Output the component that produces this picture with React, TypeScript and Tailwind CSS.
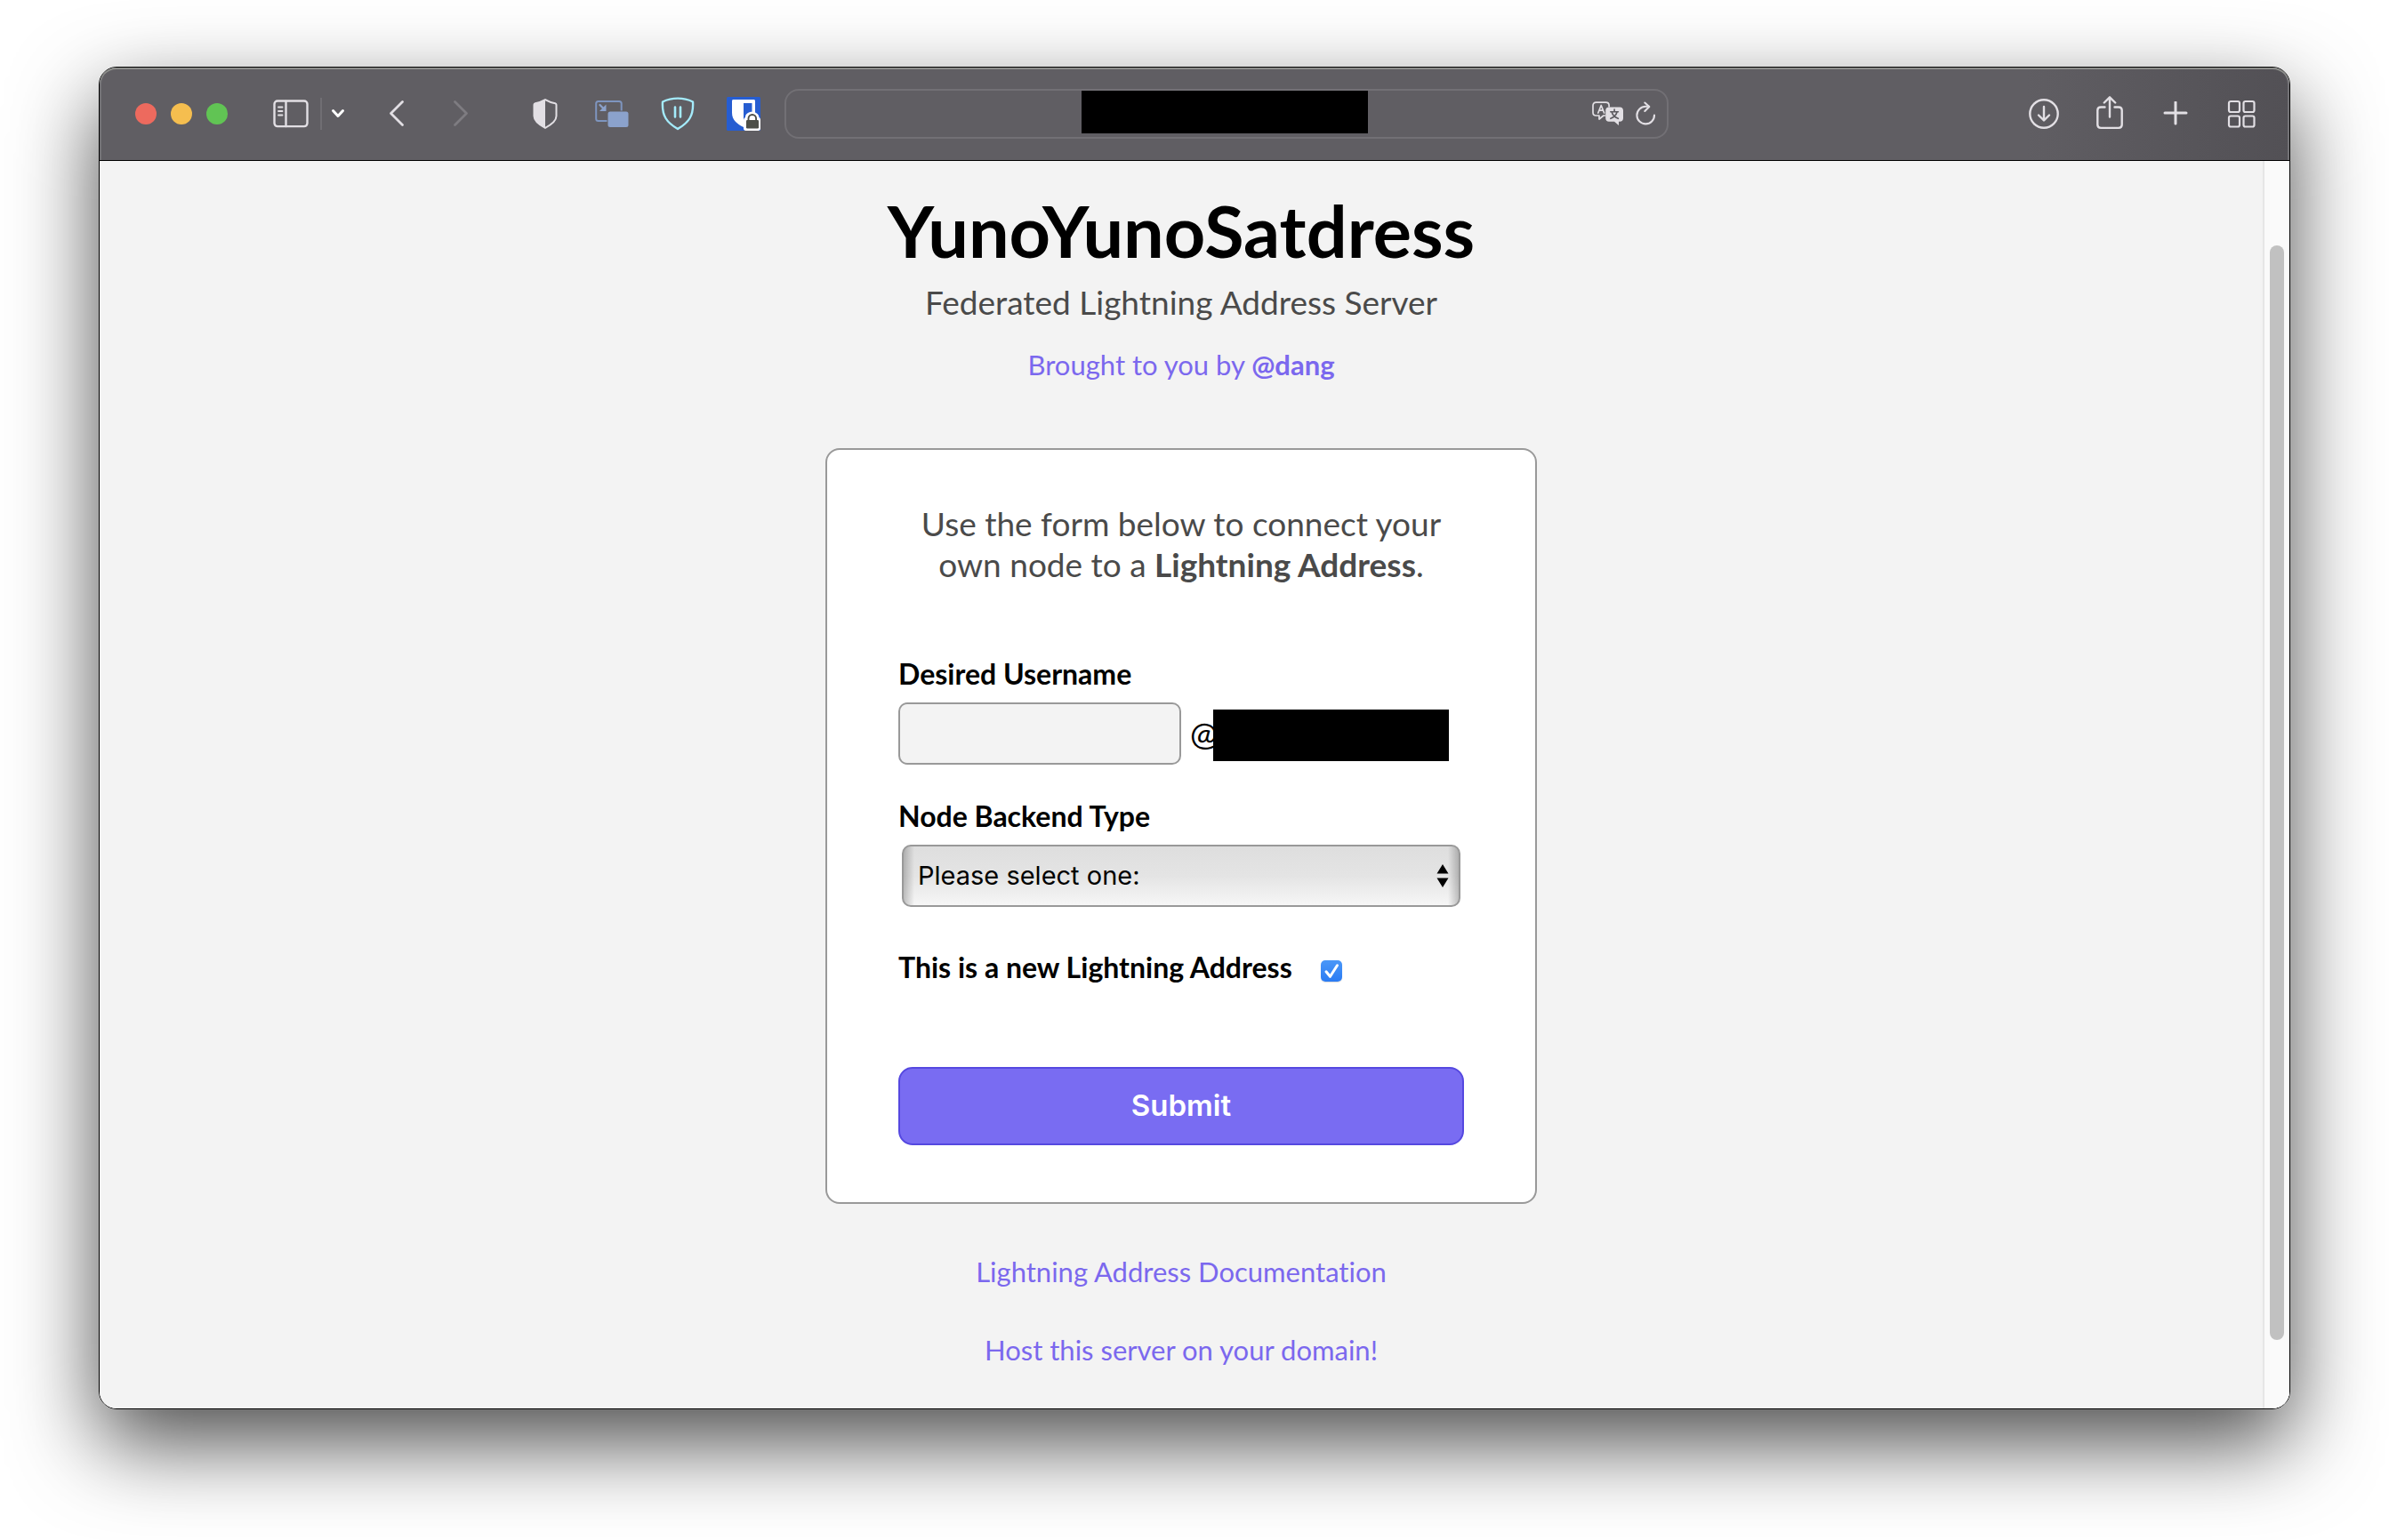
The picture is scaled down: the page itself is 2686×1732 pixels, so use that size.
import type { ReactNode } from "react";

const INK = "#e2dfe4";

function ToolButton({ label, className, children }: { label: string; className: string; children: ReactNode }) {
  return (
    <button type="button" aria-label={label} className={`flex h-10 shrink-0 items-center justify-center ${className}`}>
      {children}
    </button>
  );
}

function SidebarIcon() {
  return (
    <svg width="40" height="32" viewBox="0 0 40 32" fill="none" stroke={INK} strokeWidth="2.4" strokeLinecap="round">
      <rect x="1.5" y="1.5" width="37" height="28.6" rx="3.5" />
      <path d="M14.5 2v28" />
      <path d="M6 8.5h4.5M6 13h4.5M6 17.5h4.5" strokeWidth="1.8" />
    </svg>
  );
}

function ShieldHalfIcon() {
  return (
    <svg width="28" height="34" viewBox="0 0 28 34">
      <path d="M14 1.2c3.4 2 7.6 3.4 11.2 4 .8.2 1.3.8 1.3 1.6v12.6c0 5.6-5.5 9.6-12.500 13.4C7 29 1.5 25 1.5 19.4V6.8c0-.8.5-1.4 1.3-1.6C6.4 4.6 10.6 3.2 14 1.2z" fill="none" stroke={INK} strokeWidth="2" />
      <path d="M14 1C10.6 3 6.4 4.4 2.8 5 2 5.2 1.3 5.8 1.3 6.8v12.6C1.3 25 7 29.2 14 33z" fill={INK} />
    </svg>
  );
}

function PipIcon() {
  return (
    <svg width="38" height="32" viewBox="0 0 38 32">
      <rect x="1.2" y="2" width="28.5" height="22" rx="2.5" fill="none" stroke="#7e95bf" strokeWidth="2" />
      <rect x="13.5" y="12.5" width="25" height="20" fill="#605e63" />
      <rect x="14.5" y="13.5" width="23" height="17.5" rx="2.5" fill="#8ba2cc" />
      <path d="M5.5 6l4.5 4.5" stroke="#8ba2cc" strokeWidth="2.2" strokeLinecap="round" />
      <path d="M12.5 5.5v7.5H5z" fill="#8ba2cc" />
    </svg>
  );
}

function PauseShieldIcon() {
  return (
    <svg width="38" height="38" viewBox="0 0 38 38" fill="none" stroke="#a4ebfb" strokeWidth="2.4" strokeLinecap="round" strokeLinejoin="round">
      <path d="M2 5.5C7 3 13 1.6 19 1.6S31 3 36 5.5c.4 6.500-.2 13-3.500 18.500C29.500 29 25 32.500 19 36 13 32.500 8.500 29 5.500 24 2.200 18.500 1.600 12 2 5.500z" />
      <path d="M16 11.500v11M22 11.500v11" strokeWidth="2.6" />
    </svg>
  );
}

function PasswordVaultIcon() {
  return (
    <svg width="38" height="38" viewBox="0 0 38 38">
      <rect width="38" height="38" rx="1.5" fill="#265dd1" />
      <path d="M6 4.500C6 3.600 6.600 3 7.500 3h23c.9 0 1.500.6 1.500 1.500V18c0 8-6 12.500-13 16C12 30.500 6 26 6 18z" fill="#fff" />
      <path d="M19 7h9.500v11c0 5-4 9-9.500 12z" fill="#265dd1" />
      <path d="M19 26.500c0-2 1-3 2-3.600C21 19 24.500 16.700 28.500 16.700S36 19 36.500 22.900c1 .6 1.500 1.600 1.500 3V35.500c0 1.600-.9 2.500-2.500 2.500h-14c-1.600 0-2.500-.9-2.500-2.500z" fill="#fff" />
      <rect x="22" y="26" width="14" height="9.5" rx="1.2" fill="#4d4f48" />
      <path d="M24.500 26.500v-2.200a4.300 4.300 0 0 1 8.600 0v2.200" fill="none" stroke="#4d4f48" strokeWidth="1.9" />
    </svg>
  );
}

function TranslateIcon() {
  return (
    <svg width="36" height="28" viewBox="0 0 36 28">
      <path d="M4.500 1.200h11c2.200 0 3.600 1.400 3.600 3.500v1.800M15 16h-2.200l-4.800 4v-4H4.500c-2.200 0-3.500-1.300-3.500-3.500V4.700C1 2.600 2.300 1.200 4.500 1.200" fill="none" stroke={INK} strokeWidth="1.7" strokeLinejoin="round" />
      <path d="M6.800 13L10.200 4.500 13.600 13M8 10.200h4.400" fill="none" stroke={INK} strokeWidth="1.7" strokeLinecap="round" strokeLinejoin="round" />
      <path d="M19 6.500h12.200c2.400 0 3.800 1.400 3.800 3.800v8.700c0 2.400-1.400 3.800-3.800 3.800H30V27l-5-4.200h-6c-2.400 0-3.800-1.400-3.800-3.800v-8.700c0-2.400 1.400-3.800 3.800-3.800z" fill={INK} />
      <path d="M25.100 9v2.300M20.800 11.700h8.600M22.200 12c.8 3.200 3.400 5.800 7.200 7.300M28 12c-.8 3.200-3.400 5.800-7.200 7.300" fill="none" stroke="#5c5a5f" strokeWidth="1.6" strokeLinecap="round" />
    </svg>
  );
}

function ReloadIcon() {
  return (
    <svg width="24" height="28" viewBox="0 0 24 28" fill="none" stroke={INK} strokeWidth="2.1" strokeLinecap="round" strokeLinejoin="round">
      <path d="M22 15.500a9.800 9.800 0 1 1-9.800-9.700H16" />
      <path d="M11.300 1.500l5 4.500-5 5" />
    </svg>
  );
}

function DownloadIcon() {
  return (
    <svg width="36" height="36" viewBox="0 0 36 36" fill="none" stroke={INK} strokeWidth="2.4" strokeLinecap="round" strokeLinejoin="round">
      <circle cx="18" cy="18" r="15.7" />
      <path d="M18 10v15M12 19.500l6 6 6-6" />
    </svg>
  );
}

function ShareIcon() {
  return (
    <svg width="30" height="40" viewBox="0 0 30 40" fill="none" stroke={INK} strokeWidth="2.4" strokeLinecap="round" strokeLinejoin="round">
      <path d="M9.500 12.500H5c-2.200 0-3.700 1.400-3.700 3.600v16.200c0 2.200 1.500 3.600 3.700 3.600h20c2.200 0 3.700-1.400 3.700-3.600V16.100c0-2.200-1.500-3.600-3.700-3.600h-4.500" />
      <path d="M15 23.500V1.500M8.800 7.500L15 1.300 21.200 7.500" />
    </svg>
  );
}

function GridIcon() {
  return (
    <svg width="32" height="32" viewBox="0 0 32 32" fill="none" stroke={INK} strokeWidth="2.2">
      <rect x="2" y="2" width="12" height="12" rx="2" />
      <rect x="18.5" y="2" width="12" height="12" rx="2" />
      <rect x="2" y="18.5" width="12" height="12" rx="2" />
      <rect x="18.5" y="18.5" width="12" height="12" rx="2" />
    </svg>
  );
}

function Toolbar() {
  return (
    <header className="flex h-26 items-center rounded-t-[19px] bg-linear-to-r from-[#605e63] from-88% to-[#525055] pr-[34px] pl-10 shadow-[inset_0_2px_0_#8c8d8a,inset_2px_0_0_#737276,inset_-2px_0_0_#737276]">
      <div className="flex shrink-0 gap-4">
        <button type="button" aria-label="Close window" className="size-6 rounded-full bg-[#ed6a5e]" />
        <button type="button" aria-label="Minimise window" className="size-6 rounded-full bg-[#f5be4f]" />
        <button type="button" aria-label="Zoom window" className="size-6 rounded-full bg-[#61c454]" />
      </div>
      <ToolButton label="Show sidebar" className="ml-[51px] w-10">
        <SidebarIcon />
      </ToolButton>
      <div className="ml-[13px] h-9 w-0.5 shrink-0 bg-[#706e73]" />
      <ToolButton label="Tab groups" className="ml-1 w-7">
        <svg width="16" height="12" viewBox="0 0 16 12" fill="none" stroke="#fff" strokeWidth="3" strokeLinecap="round" strokeLinejoin="round">
          <path d="M2.500 2.500L8 8.500l5.500-6" />
        </svg>
      </ToolButton>
      <ToolButton label="Back" className="ml-9 w-8">
        <svg width="18" height="32" viewBox="0 0 18 32" fill="none" stroke={INK} strokeWidth="2.8" strokeLinecap="round" strokeLinejoin="round">
          <path d="M15.500 2.500L2.500 15.500l13 13" />
        </svg>
      </ToolButton>
      <ToolButton label="Forward" className="ml-10 w-8">
        <svg width="18" height="32" viewBox="0 0 18 32" fill="none" stroke="#7e7c81" strokeWidth="2.8" strokeLinecap="round" strokeLinejoin="round">
          <path d="M2.500 2.500l13 13-13 13" />
        </svg>
      </ToolButton>
      <ToolButton label="Privacy report" className="ml-[59px] w-10">
        <ShieldHalfIcon />
      </ToolButton>
      <ToolButton label="Picture in picture" className="ml-[35px] w-10">
        <PipIcon />
      </ToolButton>
      <ToolButton label="Pause blocking" className="ml-[34px] w-10">
        <PauseShieldIcon />
      </ToolButton>
      <ToolButton label="Password vault" className="ml-[34px] w-10">
        <PasswordVaultIcon />
      </ToolButton>
      <div className="mr-10 ml-[26px] flex h-14 max-w-[994px] flex-1 items-center rounded-[16px] border-2 border-[#727075]">
        <div className="mb-1 ml-[332px] h-12 w-[322px] shrink-0 bg-black" />
        <div className="ml-auto flex items-center gap-2 pr-2.5">
          <ToolButton label="Translate" className="w-10">
            <TranslateIcon />
          </ToolButton>
          <ToolButton label="Reload" className="w-7">
            <ReloadIcon />
          </ToolButton>
        </div>
      </div>
      <div className="ml-auto flex shrink-0 gap-[34px]">
        <ToolButton label="Downloads" className="w-10">
          <DownloadIcon />
        </ToolButton>
        <ToolButton label="Share" className="w-10">
          <ShareIcon />
        </ToolButton>
        <ToolButton label="New tab" className="w-10">
          <svg width="28" height="28" viewBox="0 0 28 28" stroke={INK} strokeWidth="3" strokeLinecap="round">
            <path d="M14 1v24M2 13h24" />
          </svg>
        </ToolButton>
        <ToolButton label="Tab overview" className="w-10">
          <GridIcon />
        </ToolButton>
      </div>
    </header>
  );
}

function ConnectForm() {
  return (
    <form className="mx-auto mt-[74px] w-[800px] max-w-full rounded-2xl border-2 border-[#999] bg-white px-20 pt-[60px] pb-16" onSubmit={(e) => e.preventDefault()}>
      <p className="text-center text-[37px] leading-[46px] text-[#4a4a4a]">
        Use the form below to connect your
        <br />
        own node to a <strong className="font-bold">Lightning Address</strong>.
      </p>

      <label htmlFor="username" className="mt-20 block text-[32px] leading-10 font-bold">
        Desired Username
      </label>
      <div className="mt-3 flex items-center">
        <input id="username" type="text" className="h-[70px] w-[318px] rounded-[10px] border-2 border-[#999] bg-[#f3f3f3] px-4 text-[32px]" />
        <span className="ml-2.5 w-[26px] text-[37px] leading-10 whitespace-nowrap">@</span>
        <span className="mt-1 h-[58px] w-[265px] bg-black" />
      </div>

      <label htmlFor="backend" className="mt-[38px] block text-[32px] leading-10 font-bold">
        Node Backend Type
      </label>
      <div className="relative mx-1 mt-3">
        <select
          id="backend"
          className="block h-[70px] w-full appearance-none rounded-[10px] border-2 border-[#999] bg-[linear-gradient(to_right,#00000038,#00000000_12px,#00000000_calc(100%-12px),#00000038),linear-gradient(#dedede,#e4e4e4_50%,#f6f6f6)] pl-4 font-['Inter',sans-serif] text-[29px]"
        >
          <option>Please select one:</option>
        </select>
        <svg className="pointer-events-none absolute top-[22px] right-[13px]" width="14" height="26" viewBox="0 0 14 26">
          <path d="M7 0l6.500 10.500H.5zM7 26L.5 15.500h13z" fill="#000" />
        </svg>
      </div>

      <div className="mt-12 flex items-center">
        <label htmlFor="new-address" className="text-[32px] leading-10 font-bold">
          This is a new Lightning Address
        </label>
        <span className="relative mt-2 ml-8 size-6">
          <input id="new-address" type="checkbox" defaultChecked className="block size-6 appearance-none rounded-[5px] bg-linear-to-b from-[#4a97f8] to-[#2a7bf3] shadow-[0_1px_1px_#00000026]" />
          <svg className="pointer-events-none absolute inset-0" width="24" height="24" viewBox="0 0 24 24" fill="none" stroke="#fff" strokeWidth="3" strokeLinecap="round" strokeLinejoin="round">
            <path d="M6 12.800l4.500 5.500 8-12.500" />
          </svg>
        </span>
      </div>

      <button type="submit" className="mt-[92px] block h-22 w-full rounded-2xl border-2 border-[#5548e0] bg-[#796cf2] font-['Inter',sans-serif] text-[33px] font-semibold text-white">
        Submit
      </button>
    </form>
  );
}

export default function App() {
  return (
    <div className="min-h-screen bg-white px-[111px] pt-[75px] pb-[147px] font-['Lato',sans-serif] text-black [font-variant-ligatures:no-common-ligatures]">
      <div className="rounded-[20px] border border-black shadow-[0_38px_96px_#000000b3]">
        <Toolbar />
        <div className="flex rounded-b-[19px] border-t border-black bg-[#f3f3f3]">
          <main className="flex-1 pt-[30px] pb-[46px]">
            <h1 className="text-center text-[81px] leading-24 font-bold">YunoYunoSatdress</h1>
            <p className="mt-2.5 text-center text-[37px] leading-[46px] text-[#4a4a4a]">Federated Lightning Address Server</p>
            <p className="mt-[27px] text-center text-[31px] leading-10 text-[#7b68ee]">
              <a href="#dang">
                Brought to you by <strong className="font-bold">@dang</strong>
              </a>
            </p>
            <ConnectForm />
            <p className="mt-14 text-center text-[31px] leading-10 text-[#7b68ee]">
              <a href="#documentation">Lightning Address Documentation</a>
            </p>
            <p className="mt-12 text-center text-[31px] leading-10 text-[#7b68ee]">
              <a href="#host">Host this server on your domain!</a>
            </p>
          </main>
          <div className="flex w-[30px] shrink-0 justify-center rounded-br-[19px] border-l-2 border-[#e6e6e6] bg-[#fafafa] pt-[95px] pb-[77px]">
            <div className="w-4 rounded-full bg-[#c1c1c1]" />
          </div>
        </div>
      </div>
    </div>
  );
}
